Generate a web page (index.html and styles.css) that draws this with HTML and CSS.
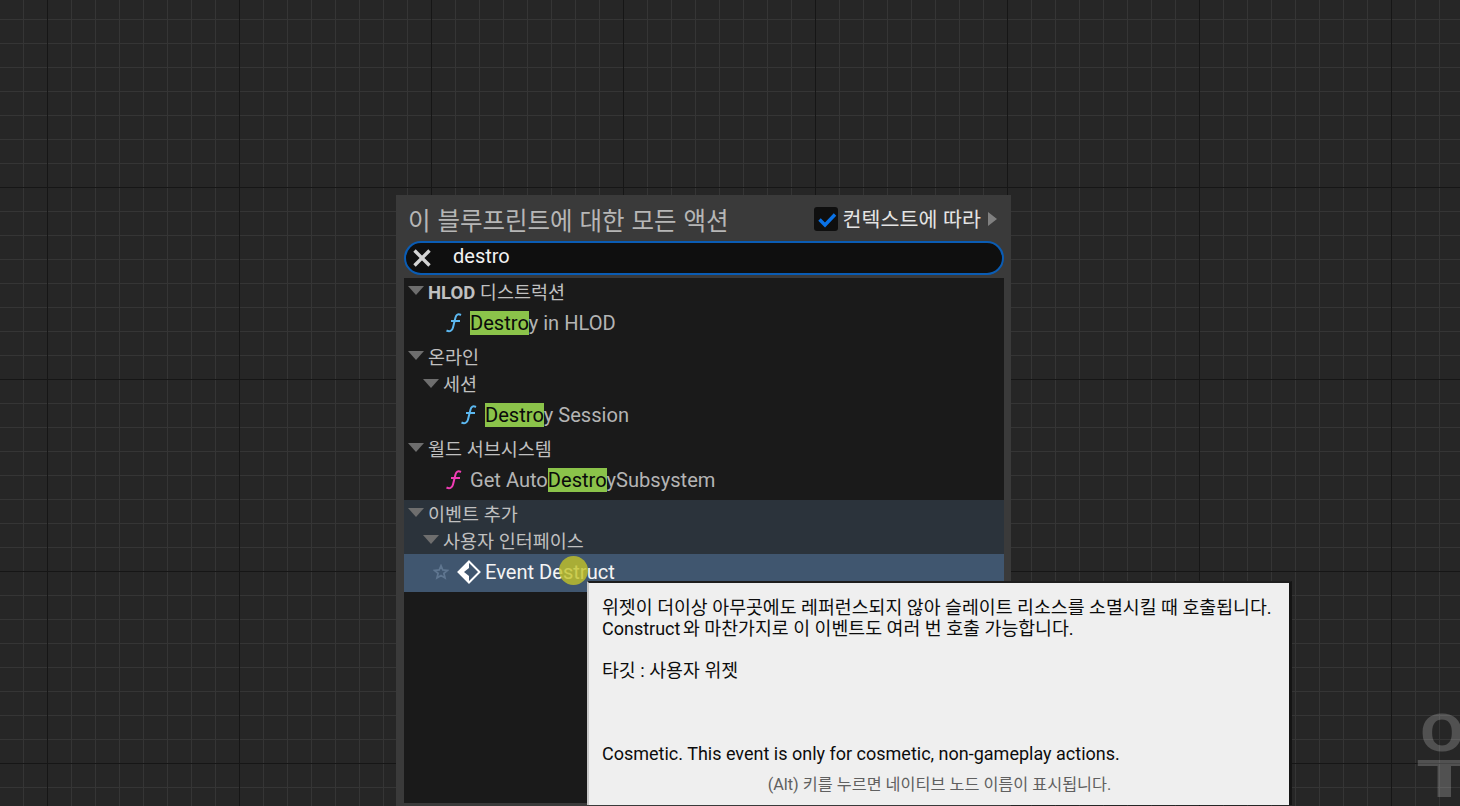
FILE: index.html
```html
<!DOCTYPE html>
<html lang="ko">
<head>
<meta charset="utf-8">
<title>Blueprint actions</title>
<link rel="stylesheet" href="styles.css">
</head>
<body>
<main class="canvas">
  <div class="watermark"><span class="wm-o">O</span><span class="wm-t">T</span></div>

  <section class="menu">
    <header class="menu-head">
      <h1 class="menu-title">이 블루프린트에 대한 모든 액션</h1>
      <div class="context">
        <span class="checkbox">
          <svg viewBox="0 0 24 24" width="24" height="24"><path d="M5.5 12.5 L11 18 L21 7.5" fill="none" stroke="#0a72e6" stroke-width="3.4"/></svg>
        </span>
        <span class="context-label">컨텍스트에 따라</span>
        <span class="context-arrow"></span>
      </div>
    </header>

    <div class="search">
      <svg class="search-x" viewBox="0 0 20 20" width="20" height="20"><path d="M2.5 2.5 L17.5 17.5 M17.5 2.5 L2.5 17.5" stroke="#d4d4d4" stroke-width="3.4" fill="none"/></svg>
      <span class="search-text">destro</span>
    </div>

    <div class="tree">
      <div class="row head"><i class="tri"></i><span><b class="strong">HLOD</b> 디스트럭션</span></div>
      <div class="row item lvl1">
        <svg class="fn" viewBox="0 0 18 22" width="18" height="22"><path d="M16 3 C13 1.5 11.3 2.5 10.5 5.5 L8 15.5 C7.2 19 4.5 20 1.5 18.5 M6 9 H15" fill="none" stroke="#5cb8f0" stroke-width="2"/></svg>
        <span class="label"><mark>Destro</mark>y in HLOD</span>
      </div>

      <div class="row head gap"><i class="tri"></i>온라인</div>
      <div class="row sub"><i class="tri"></i>세션</div>
      <div class="row item lvl2">
        <svg class="fn" viewBox="0 0 18 22" width="18" height="22"><path d="M16 3 C13 1.5 11.3 2.5 10.5 5.5 L8 15.5 C7.2 19 4.5 20 1.5 18.5 M6 9 H15" fill="none" stroke="#5cb8f0" stroke-width="2"/></svg>
        <span class="label"><mark>Destro</mark>y Session</span>
      </div>

      <div class="row head gap"><i class="tri"></i>월드 서브시스템</div>
      <div class="row item lvl1">
        <svg class="fn" viewBox="0 0 18 22" width="18" height="22"><path d="M16 3 C13 1.5 11.3 2.5 10.5 5.5 L8 15.5 C7.2 19 4.5 20 1.5 18.5 M6 9 H15" fill="none" stroke="#f03cb4" stroke-width="2"/></svg>
        <span class="label">Get Auto<mark>Destro</mark>ySubsystem</span>
      </div>

      <div class="band">
        <div class="row head"><i class="tri"></i>이벤트 추가</div>
        <div class="row sub band-sub"><i class="tri"></i>사용자 인터페이스</div>
        <div class="row selected">
          <svg class="star" viewBox="0 0 16 16" width="16" height="16"><path d="M8 1.8 L9.8 6 L14.4 6.4 L10.9 9.4 L12 13.9 L8 11.5 L4 13.9 L5.1 9.4 L1.6 6.4 L6.2 6 Z" fill="none" stroke="#5f7690" stroke-width="1.8"/></svg>
          <svg class="event" viewBox="0 0 24 24" width="24" height="24"><path d="M12 1.5 L22.5 12 L12 22.5 L1.5 12 Z" fill="none" stroke="#fff" stroke-width="2"/><path d="M12 1 L12 8 L7 12 L12 16 L12 23 L1 12 Z" fill="#fff"/></svg>
          <span class="label-on">Event Destruct</span>
        </div>
      </div>
    </div>
  </section>

  <div class="cursor"></div>

  <aside class="tooltip">
    <p><span class="ko">위젯이 더이상 아무곳에도 레퍼런스되지 않아 슬레이트 리소스를 소멸시킬 때 호출됩니다.</span><br>Construct <span class="ko tight">와 마찬가지로 이 이벤트도 여러 번 호출 가능합니다.</span></p>
    <p class="t-target"><span class="ko">타깃 : 사용자 위젯</span></p>
    <p class="t-cosmetic">Cosmetic. This event is only for cosmetic, non-gameplay actions.</p>
    <p class="t-hint">(Alt) 키를 누르면 네이티브 노드 이름이 표시됩니다.</p>
  </aside>
</main>
</body>
</html>
```
FILE: styles.css
```css
* { box-sizing: border-box; }
html, body { margin: 0; padding: 0; height: 100%; overflow: hidden; }
body { font-family: Roboto, "Noto Sans CJK KR", sans-serif; }

.canvas {
  position: relative;
  width: 1460px;
  height: 806px;
  overflow: hidden;
  background-color: #262626;
  background-image:
    repeating-linear-gradient(90deg, transparent 0 47px, #161616 47px 48px, transparent 48px 192px),
    repeating-linear-gradient(180deg, transparent 0 187px, #161616 187px 188px, transparent 188px 192px),
    repeating-linear-gradient(90deg, transparent 0 23px, #353535 23px 24px),
    repeating-linear-gradient(180deg, transparent 0 19px, #353535 19px 20px, transparent 20px 24px);
}

.watermark {
  position: absolute;
  left: 1416px;
  top: 711px;
  display: flex;
  flex-direction: column;
  align-items: flex-start;
  font: 700 51px/46px Roboto, sans-serif;
  color: rgba(255, 255, 255, 0.2);
}
.wm-o { margin-left: 4px; transform: scaleX(1.25); transform-origin: left center; }
.wm-t { transform: scaleX(1.8); transform-origin: left center; }

.menu {
  position: absolute;
  left: 396px;
  top: 195px;
  width: 615px;
  height: 611px;
  background: #3a3a3a;
  padding: 0 7px 3px 8px;
  display: flex;
  flex-direction: column;
}
.menu-head {
  height: 46px;
  display: flex;
  align-items: center;
  justify-content: space-between;
  padding: 3px 0 3px 4px;
}
.menu-title {
  margin: 2px 0 0;
  font-family: "Noto Sans CJK KR", sans-serif;
  font-size: 24.5px;
  font-weight: 400;
  color: #b6b6b6;
}
.context { display: flex; align-items: center; }
.checkbox {
  width: 24px;
  height: 24px;
  border-radius: 3px;
  background: #0f0f0f;
  margin-right: 5px;
  margin-top: 2px;
  display: flex;
}
.context-label {
  font-family: "Noto Sans CJK KR", sans-serif;
  font-size: 20.6px;
  color: #e4e4e4;
}
.context-arrow {
  width: 0;
  height: 0;
  margin: 2px 7px 0 7px;
  border-left: 9px solid #808080;
  border-top: 7px solid transparent;
  border-bottom: 7px solid transparent;
}

.search {
  height: 34px;
  border: 2px solid #0a5cb4;
  border-radius: 17px;
  background: #0f0f0f;
  display: flex;
  align-items: center;
  padding-left: 6px;
}
.search-x { flex: none; }
.search-text {
  margin-left: 21px;
  margin-bottom: 4px;
  font-size: 20px;
  color: #f2f2f2;
}

.tree {
  flex: 1;
  margin-top: 3px;
  background: #1a1a1a;
  font-size: 18.5px;
  color: #c0c0c0;
}
.row { display: flex; align-items: center; white-space: nowrap; }
.gap { margin-top: 3px; }
.head { height: 28px; padding: 0 0 3px 4px; }
.sub { height: 27px; padding: 0 0 3px 19px; }
.band-sub { height: 26px; }
.strong { font-weight: 700; }
.tri {
  width: 0;
  height: 0;
  flex: none;
  margin-right: 4px;
  border-top: 9px solid #6e6e6e;
  border-left: 8px solid transparent;
  border-right: 8px solid transparent;
}
.item { height: 34px; font-size: 20.1px; color: #b4b4b4; }
.lvl1 { padding-left: 41px; }
.lvl2 { padding-left: 56px; }
.fn { flex: none; margin-right: 7px; }
mark { background: #8bc34a; color: #0a0a0a; }

.band {
  margin-top: 3px;
  background: #2b333b;
}
.selected {
  height: 38px;
  background: #40566f;
  padding: 0 0 2px 29px;
  font-size: 20.1px;
  color: #fff;
}
.star { flex: none; margin-right: 8px; }
.event { flex: none; margin-right: 4px; }
.label-on { color: #f4f4f4; }

.cursor {
  position: absolute;
  left: 559px;
  top: 556px;
  width: 29px;
  height: 29px;
  border-radius: 50%;
  background: rgba(195, 195, 40, 0.8);
}

.tooltip {
  position: absolute;
  left: 587px;
  top: 581px;
  width: 705px;
  height: 224px;
  background: #efefef;
  border-top: 2px solid #1e1e1e;
  border-right: 3px solid #141414;
  border-left: 2px solid #c8c8c8;
  padding: 14px 12px 0 13px;
  font-size: 18px;
  line-height: 21px;
  color: #0c0c0c;
}
.tooltip p { margin: 0; white-space: nowrap; }
.ko { font-size: 18.33px; }
.tight { margin-left: -2px; }
.tooltip .t-target { margin-top: 21px; }
.tooltip .t-cosmetic { margin-top: 62px; }
.tooltip .t-hint {
  margin-top: 10px;
  text-align: center;
  font-size: 16.25px;
  color: #606060;
}
```
